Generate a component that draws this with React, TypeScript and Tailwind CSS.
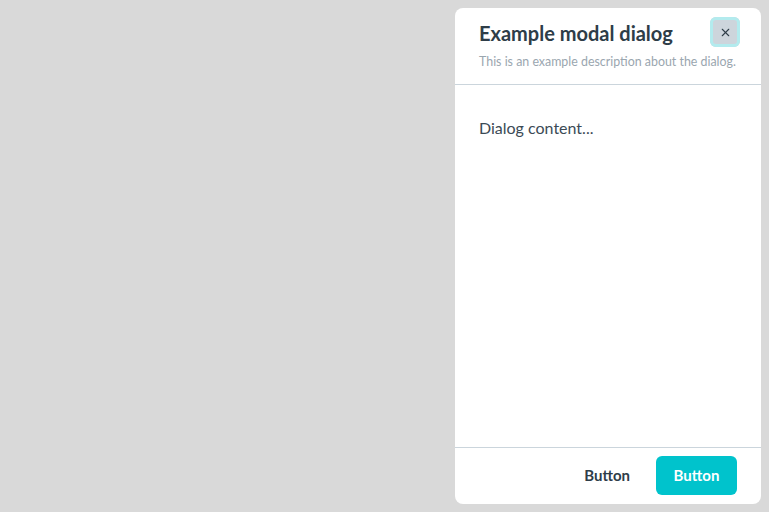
import { X } from 'lucide-react'

export default function App() {
  return (
    <div
      className="h-[512px] w-full bg-[#d9d9d9] flex justify-end p-2"
      style={{ fontFamily: '"Source Sans Pro", Lato, "Noto Sans", sans-serif' }}
    >
      <div className="w-[306px] h-full bg-white rounded-lg flex flex-col">
        <div className="relative border-b border-[#cbd5dc] px-6 pt-[11px] pb-[14px]">
          <h2 className="text-[20px] leading-[28px] font-bold text-[#2e3d48]">Example modal dialog</h2>
          <p className="text-[12.4px] leading-[16px] text-[#9aa6af] mt-[7px] whitespace-nowrap">
            This is an example description about the dialog.
          </p>
          <button className="absolute right-[21px] top-[9px] w-[30px] h-[30px] rounded-md bg-[#cdd5dc] ring-[3px] ring-inset ring-[#b3ebee] flex items-center justify-center text-[#2e3d48]">
            <X className="w-[13px] h-[13px]" strokeWidth={2} />
          </button>
        </div>
        <div className="flex-1 px-6 pt-[31px] text-[16px] leading-[24px] text-[#3b4a55]">
          Dialog content...
        </div>
        <div className="border-t border-[#cbd5dc] px-6 pt-[8px] pb-[9px] flex justify-end items-center gap-[26px]">
          <button className="text-[15px] font-bold text-[#2e3d48]">Button</button>
          <button className="h-[39px] w-[81px] rounded-md bg-[#00c3cc] text-white text-[15px] font-bold">
            Button
          </button>
        </div>
      </div>
    </div>
  )
}
